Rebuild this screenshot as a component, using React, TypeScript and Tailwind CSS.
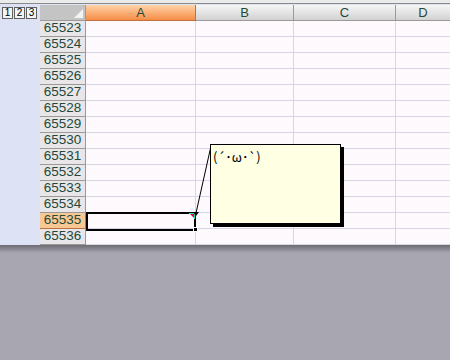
import React from 'react';

const rows = [65523, 65524, 65525, 65526, 65527, 65528, 65529, 65530, 65531, 65532, 65533, 65534, 65535, 65536];

const font = { fontFamily: '"Liberation Sans", "Noto Sans CJK JP", sans-serif' };

const App = () => {
  return (
    <div className="w-[450px] h-[360px] bg-[#a8a6b0] flex flex-col overflow-hidden relative" style={font}>
      <div className="h-[245px] bg-[#dde3f5] flex flex-col shrink-0">
        <div className="h-[4px] bg-[#ebebeb] border-b border-[#8a8a8a]" />
        <div className="flex flex-1">
          <div className="w-[40px] shrink-0 pt-[3px] pl-[2px]">
            <div className="flex gap-[1px]">
              {['1', '2', '3'].map((n) => (
                <div key={n} className="w-[11px] h-[12px] bg-[#f4f4f4] border border-[#606060] text-[10px] leading-[10px] text-black flex items-center justify-center">
                  {n}
                </div>
              ))}
            </div>
          </div>
          <div className="flex-1 flex flex-col pt-[1px]">
            {/* header row */}
            <div className="flex h-[16px] text-[13px] text-[#1f4a3a]">
              <div className="w-[46px] shrink-0 bg-[#c4c4c4] border-r border-b border-[#9a9a9a] relative">
                <div className="absolute right-[2px] bottom-[2px] w-0 h-0 border-l-[9px] border-l-transparent border-b-[9px] border-b-[#f4f4f4]" />
              </div>
              <div className="w-[110px] shrink-0 bg-gradient-to-b from-[#ffd3a8] to-[#f48c44] border-r border-b border-[#c07040] flex items-center justify-center">A</div>
              <div className="w-[98px] shrink-0 bg-gradient-to-b from-[#f6f6f6] to-[#d2d2d2] border-r border-b border-[#9a9a9a] flex items-center justify-center">B</div>
              <div className="w-[102px] shrink-0 bg-gradient-to-b from-[#f6f6f6] to-[#d2d2d2] border-r border-b border-[#9a9a9a] flex items-center justify-center">C</div>
              <div className="flex-1 bg-gradient-to-b from-[#f6f6f6] to-[#d2d2d2] border-b border-[#9a9a9a] flex items-center justify-center">D</div>
            </div>
            {rows.map((r) => (
              <div key={r} className="flex h-[16px]">
                <div
                  className={
                    r === 65535
                      ? 'w-[46px] shrink-0 bg-[#f8c894] border-r border-b border-[#c07040] text-[13.5px] text-[#1f4a3a] flex items-center justify-center'
                      : 'w-[46px] shrink-0 bg-[#e8e6e8] border-r border-b border-[#9a9a9a] text-[13.5px] text-[#1f4a3a] flex items-center justify-center'
                  }
                >
                  {r}
                </div>
                <div className="w-[110px] shrink-0 bg-[#fdf9fd] border-r border-b border-[#d6d6e4]" />
                <div className="w-[98px] shrink-0 bg-[#fdf9fd] border-r border-b border-[#d6d6e4]" />
                <div className="w-[102px] shrink-0 bg-[#fdf9fd] border-r border-b border-[#d6d6e4]" />
                <div className="flex-1 bg-[#fdf9fd] border-b border-[#d6d6e4]" />
              </div>
            ))}
          </div>
        </div>
      </div>
      <div className="h-[8px] bg-gradient-to-b from-[#6c6b72] to-[#a8a6b0]" />

      {/* selected cell */}
      <div className="absolute left-[86px] top-[212px] w-[110px] h-[19px] border-2 border-black" />
      <div className="absolute left-[193px] top-[227px] w-[5px] h-[5px] bg-black border border-[#fdf9fd]" />
      {/* comment indicator */}
      <div className="absolute left-[190px] top-[214px] w-0 h-0 border-l-[4px] border-l-transparent border-t-[4px] border-t-[#e01010]" />
      <div className="absolute left-[189px] top-[213px] w-[6px] h-[1px] bg-[#20e0e0]" />
      <div className="absolute left-[194px] top-[213px] w-[1px] h-[6px] bg-[#20e0e0]" />

      {/* connector */}
      <svg className="absolute left-0 top-0" width="450" height="360">
        <line x1="196" y1="213" x2="211" y2="146" stroke="black" strokeWidth="1" />
        <polygon points="193,212 199,212 196,216" fill="black" />
      </svg>

      {/* comment box */}
      <div className="absolute left-[210px] top-[144px] w-[131px] h-[80px] bg-black" style={{ transform: 'translate(3px,3px)' }} />
      <div className="absolute left-[210px] top-[144px] w-[131px] h-[80px] bg-[#ffffe4] border border-black px-[2px]">
        <span className="text-[13px] leading-[14px] text-black" style={{ fontFamily: '"Noto Sans CJK JP", sans-serif' }}>
          (´･ω･`)
        </span>
      </div>
    </div>
  );
};

export default App;
